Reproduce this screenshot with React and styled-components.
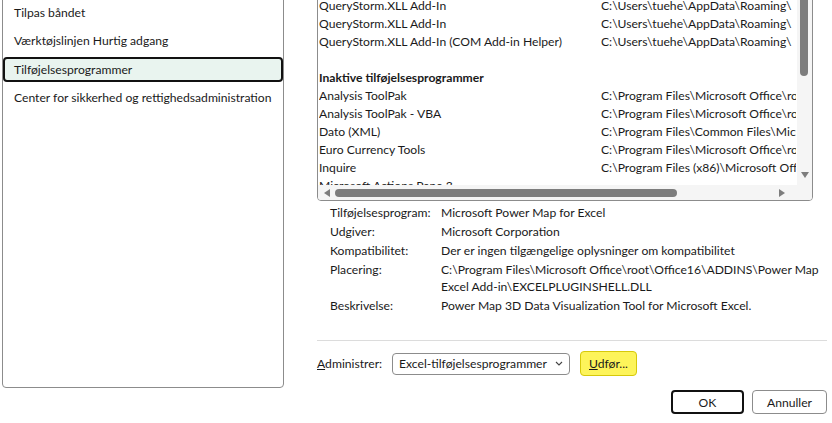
import React from "react";
import styled, { createGlobalStyle } from "styled-components";

const Global = createGlobalStyle`
  html, body { margin: 0; padding: 0; background: #ffffff; }
  body { font-family: Lato, "Noto Sans", sans-serif; font-size: 12.15px; color: #1a1a1a; }
`;

const Dialog = styled.div`
  width: 832px;
  height: 423px;
  overflow: hidden;
  background: #ffffff;
  display: flex;
  flex-direction: column;
`;

const Main = styled.div`
  display: flex;
  margin-top: -10px;
  padding-left: 2px;
  gap: 33px;
`;

const NavPanel = styled.div`
  width: 282px;
  height: 398px;
  box-sizing: border-box;
  border: 1px solid #8c8c8c;
  border-radius: 0 0 4px 4px;
  padding-top: 8.5px;
  display: flex;
  flex-direction: column;
  gap: 3.5px;
`;

const NavItem = styled.div`
  height: 25px;
  box-sizing: border-box;
  display: flex;
  align-items: center;
  padding-left: ${(p) => (p.$active ? "9px" : "11px")};
  border: ${(p) => (p.$active ? "2px solid #111" : "0")};
  border-radius: 4px;
  background: ${(p) => (p.$active ? "#e9f4ef" : "transparent")};
  white-space: nowrap;
`;

const RightCol = styled.div`
  width: 510px;
  display: flex;
  flex-direction: column;
`;

const ListBox = styled.div`
  position: relative;
  width: 496px;
  height: 211px;
  box-sizing: border-box;
  border: 1px solid #8c8c8c;
  border-radius: 0 0 4px 4px;
  overflow: hidden;
`;

const ListRows = styled.div`
  padding-top: 5px;
  padding-left: 1px;
  display: flex;
  flex-direction: column;
`;

const Row = styled.div`
  height: 18px;
  display: grid;
  grid-template-columns: 282px 195px;
  align-items: center;
  white-space: nowrap;
  overflow: hidden;
  font-weight: ${(p) => (p.$bold ? 700 : 400)};
`;

const Cell = styled.span`
  overflow: hidden;
`;

const VScroll = styled.div`
  position: absolute;
  right: 0;
  top: 0;
  bottom: 0;
  width: 15px;
  background: #f5f5f5;
`;

const VThumb = styled.div`
  position: absolute;
  left: 3px;
  top: 0;
  width: 8px;
  height: 85px;
  border-radius: 0 0 4px 4px;
  background: #7d7d7d;
`;

const HScroll = styled.div`
  position: absolute;
  left: 0;
  right: 15px;
  bottom: 0;
  height: 15px;
  background: #f5f5f5;
`;

const HThumb = styled.div`
  position: absolute;
  left: 17px;
  top: 4px;
  width: 342px;
  height: 8px;
  border-radius: 4px;
  background: #7d7d7d;
`;

const Arrow = styled.svg`
  position: absolute;
  fill: #7d7d7d;
`;

const Details = styled.div`
  margin-top: 3px;
  padding-left: 13px;
  display: flex;
  flex-direction: column;
  gap: 2px;
  line-height: 17px;
`;

const DetailRow = styled.div`
  display: grid;
  grid-template-columns: 111px 1fr;
`;

const Label = styled.span`
  color: #1a1a1a;
`;

const Value = styled.span`
  width: 386px;
`;

const Separator = styled.div`
  margin-top: 26px;
  height: 1px;
  background: #dcdcdc;
  width: 510px;
`;

const ManageRow = styled.div`
  margin-top: 10px;
  display: flex;
  align-items: center;
  height: 25px;
  white-space: nowrap;
`;

const ManageLabel = styled.span`
  width: 75px;
`;

const U = styled.span`
  text-decoration: underline;
`;

const Select = styled.div`
  width: 178px;
  height: 22px;
  box-sizing: border-box;
  border: 1px solid #8c8c8c;
  border-radius: 4px;
  display: flex;
  align-items: center;
  justify-content: space-between;
  padding: 0 6px 0 6px;
`;

const GoButton = styled.div`
  margin-left: 10px;
  width: 57px;
  height: 25px;
  box-sizing: border-box;
  border: 1px solid #d6c90a;
  border-radius: 4px;
  background: #fdf45a;
  display: flex;
  align-items: center;
  justify-content: center;
`;

const Footer = styled.div`
  display: flex;
  justify-content: flex-end;
  gap: 8px;
  padding-right: 5px;
  margin-top: 2px;
`;

const Button = styled.div`
  width: ${(p) => (p.$primary ? "73px" : "75px")};
  height: 24px;
  box-sizing: border-box;
  border: ${(p) => (p.$primary ? "2px solid #111" : "1px solid #8c8c8c")};
  border-radius: 4px;
  display: flex;
  align-items: center;
  justify-content: center;
`;

const active = [
  ["QueryStorm.XLL Add-In", "C:\\Users\\tuehe\\AppData\\Roaming\\"],
  ["QueryStorm.XLL Add-In", "C:\\Users\\tuehe\\AppData\\Roaming\\"],
  ["QueryStorm.XLL Add-In (COM Add-in Helper)", "C:\\Users\\tuehe\\AppData\\Roaming\\"],
];

const inactive = [
  ["Analysis ToolPak", "C:\\Program Files\\Microsoft Office\\root"],
  ["Analysis ToolPak - VBA", "C:\\Program Files\\Microsoft Office\\root"],
  ["Dato (XML)", "C:\\Program Files\\Common Files\\Microsoft"],
  ["Euro Currency Tools", "C:\\Program Files\\Microsoft Office\\root"],
  ["Inquire", "C:\\Program Files (x86)\\Microsoft Office"],
  ["Microsoft Actions Pane 3", ""],
];

const details = [
  ["Tilføjelsesprogram:", "Microsoft Power Map for Excel"],
  ["Udgiver:", "Microsoft Corporation"],
  ["Kompatibilitet:", "Der er ingen tilgængelige oplysninger om kompatibilitet"],
  ["Placering:", "C:\\Program Files\\Microsoft Office\\root\\Office16\\ADDINS\\Power Map Excel Add-in\\EXCELPLUGINSHELL.DLL"],
  ["Beskrivelse:", "Power Map 3D Data Visualization Tool for Microsoft Excel."],
];

export default function App() {
  return (
    <>
      <Global />
      <Dialog>
        <Main>
          <NavPanel>
            <NavItem>Tilpas båndet</NavItem>
            <NavItem>Værktøjslinjen Hurtig adgang</NavItem>
            <NavItem $active>Tilføjelsesprogrammer</NavItem>
            <NavItem>Center for sikkerhed og rettighedsadministration</NavItem>
          </NavPanel>
          <RightCol>
            <ListBox>
              <ListRows>
                {active.map(([n, p], i) => (
                  <Row key={"a" + i}>
                    <Cell>{n}</Cell>
                    <Cell>{p}</Cell>
                  </Row>
                ))}
                <Row />
                <Row $bold>
                  <Cell>Inaktive tilføjelsesprogrammer</Cell>
                  <Cell />
                </Row>
                {inactive.map(([n, p], i) => (
                  <Row key={"i" + i}>
                    <Cell>{n}</Cell>
                    <Cell>{p}</Cell>
                  </Row>
                ))}
              </ListRows>
              <VScroll>
                <VThumb />
                <Arrow width="8" height="6" viewBox="0 0 8 6" style={{ left: 4, bottom: 22 }}>
                  <path d="M0 0 L8 0 L4 6 Z" />
                </Arrow>
              </VScroll>
              <HScroll>
                <HThumb />
                <Arrow width="6" height="8" viewBox="0 0 6 8" style={{ left: 6, top: 4 }}>
                  <path d="M6 0 L6 8 L0 4 Z" />
                </Arrow>
                <Arrow width="6" height="8" viewBox="0 0 6 8" style={{ right: 12, top: 4 }}>
                  <path d="M0 0 L0 8 L6 4 Z" />
                </Arrow>
              </HScroll>
            </ListBox>
            <Details>
              {details.map(([l, v]) => (
                <DetailRow key={l}>
                  <Label>{l}</Label>
                  <Value>{v}</Value>
                </DetailRow>
              ))}
            </Details>
            <Separator />
            <ManageRow>
              <ManageLabel>
                <U>A</U>dministrer:
              </ManageLabel>
              <Select>
                <span>Excel-tilføjelsesprogrammer</span>
                <svg width="8" height="5" viewBox="0 0 8 5">
                  <polyline points="1,1 4,4 7,1" fill="none" stroke="#444" strokeWidth="1.1" />
                </svg>
              </Select>
              <GoButton>
                <span>
                  <U>U</U>dfør...
                </span>
              </GoButton>
            </ManageRow>
          </RightCol>
        </Main>
        <Footer>
          <Button $primary>OK</Button>
          <Button>Annuller</Button>
        </Footer>
      </Dialog>
    </>
  );
}
